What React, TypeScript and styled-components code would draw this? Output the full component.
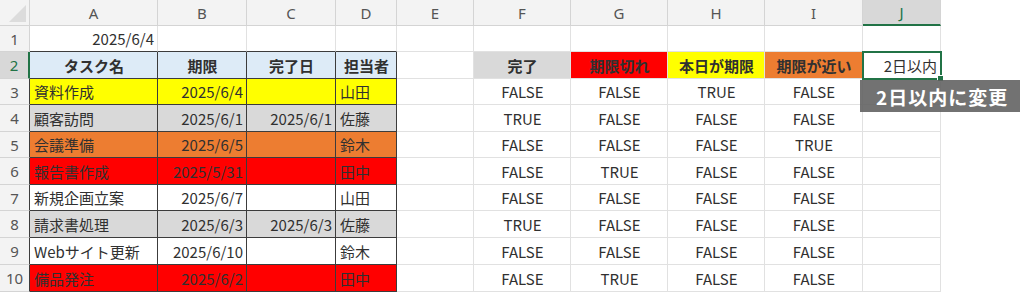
import React from 'react';
import styled, { createGlobalStyle } from 'styled-components';

const GlobalStyle = createGlobalStyle`
  html, body {
    margin: 0;
    padding: 0;
    background: #ffffff;
    overflow: hidden;
  }
  body {
    font-family: "Noto Sans CJK JP", "Noto Sans", sans-serif;
  }
`;

const colWidths = [30, 128, 89, 89, 61, 77, 97, 97, 97, 98, 78];
const rowHeights = [26, 26, 27, 26, 27, 26, 27, 26, 27, 27, 27];
const letters = ['A', 'B', 'C', 'D', 'E', 'F', 'G', 'H', 'I', 'J'];

const GRID = '#e1e1e1';
const DARK = '#3c3c3c';
const GREEN = '#217346';

const fills = {
  yellow: '#ffff00',
  gray: '#d9d9d9',
  orange: '#ed7d31',
  red: '#ff0000',
  blue: '#ddebf7',
};

type Fill = keyof typeof fills | undefined;

const Sheet = styled.div`
  position: relative;
  display: grid;
  grid-template-columns: ${colWidths.map(w => `${w}px`).join(' ')};
  grid-template-rows: ${rowHeights.map(h => `${h}px`).join(' ')};
  width: 941px;
  color: #303030;
  font-size: 15px;
`;

const Corner = styled.div`
  position: relative;
  background: #f3f3f3;
  border-right: 1px solid #d4d4d4;
  border-bottom: 1px solid #d4d4d4;
  box-sizing: border-box;

  &::after {
    content: '';
    position: absolute;
    right: 3px;
    bottom: 3px;
    border-left: 17px solid transparent;
    border-bottom: 17px solid #dcdcdc;
  }
`;

const ColHeader = styled.div<{ $active?: boolean }>`
  display: flex;
  align-items: center;
  justify-content: center;
  box-sizing: border-box;
  background: ${p => (p.$active ? '#d8d8d8' : '#f3f3f3')};
  color: ${p => (p.$active ? GREEN : '#555555')};
  border-right: 1px solid #d4d4d4;
  border-bottom: ${p => (p.$active ? `2px solid ${GREEN}` : '1px solid #d4d4d4')};
  font-family: "Noto Sans", "Noto Sans CJK JP", sans-serif;
  font-size: 15px;
`;

const RowHeader = styled.div<{ $active?: boolean; $edge?: string }>`
  display: flex;
  align-items: center;
  justify-content: center;
  box-sizing: border-box;
  background: ${p => (p.$active ? '#d8d8d8' : '#f3f3f3')};
  color: ${p => (p.$active ? GREEN : '#555555')};
  border-bottom: 1px solid #d4d4d4;
  border-right: ${p => (p.$active ? `2px solid ${GREEN}` : `1px solid ${p.$edge || '#d4d4d4'}`)};
  font-family: "Noto Sans", "Noto Sans CJK JP", sans-serif;
  font-size: 15px;
`;

const Cell = styled.div<{
  $fill?: Fill;
  $align?: 'left' | 'right' | 'center';
  $bold?: boolean;
  $right?: string;
  $bottom?: string;
  $selected?: boolean;
}>`
  position: relative;
  display: flex;
  align-items: center;
  justify-content: ${p => (p.$align === 'right' ? 'flex-end' : p.$align === 'center' ? 'center' : 'flex-start')};
  box-sizing: border-box;
  padding: 0 3px 0 4px;
  white-space: nowrap;
  overflow: visible;
  background: ${p => (p.$fill ? fills[p.$fill] : '#ffffff')};
  border-right: 1px solid ${p => p.$right || GRID};
  border-bottom: 1px solid ${p => p.$bottom || GRID};
  font-weight: ${p => (p.$bold ? 700 : 400)};
  outline: ${p => (p.$selected ? `2px solid ${GREEN}` : 'none')};
  outline-offset: -1px;
  z-index: ${p => (p.$selected ? 2 : 0)};

  &::after {
    content: '';
    display: ${p => (p.$selected ? 'block' : 'none')};
    position: absolute;
    right: -4px;
    bottom: -4px;
    width: 5px;
    height: 5px;
    background: ${GREEN};
    border: 1px solid #ffffff;
  }
`;

const Callout = styled.div`
  position: absolute;
  left: 860px;
  top: 80px;
  height: 32px;
  padding: 0 12px 0 16px;
  display: flex;
  align-items: center;
  white-space: nowrap;
  background: rgba(95, 95, 95, 0.88);
  color: #ffffff;
  font-size: 19px;
  font-weight: 700;
  letter-spacing: 1px;
  z-index: 5;
`;

type CellData = { text?: string; fill?: Fill; align?: 'left' | 'right' | 'center'; bold?: boolean };

const tasks: { name: string; due: string; done: string; who: string; fill: Fill; flags: string[] }[] = [
  { name: '資料作成', due: '2025/6/4', done: '', who: '山田', fill: 'yellow', flags: ['FALSE', 'FALSE', 'TRUE', 'FALSE'] },
  { name: '顧客訪問', due: '2025/6/1', done: '2025/6/1', who: '佐藤', fill: 'gray', flags: ['TRUE', 'FALSE', 'FALSE', 'FALSE'] },
  { name: '会議準備', due: '2025/6/5', done: '', who: '鈴木', fill: 'orange', flags: ['FALSE', 'FALSE', 'FALSE', 'TRUE'] },
  { name: '報告書作成', due: '2025/5/31', done: '', who: '田中', fill: 'red', flags: ['FALSE', 'TRUE', 'FALSE', 'FALSE'] },
  { name: '新規企画立案', due: '2025/6/7', done: '', who: '山田', fill: undefined, flags: ['FALSE', 'FALSE', 'FALSE', 'FALSE'] },
  { name: '請求書処理', due: '2025/6/3', done: '2025/6/3', who: '佐藤', fill: 'gray', flags: ['TRUE', 'FALSE', 'FALSE', 'FALSE'] },
  { name: 'Webサイト更新', due: '2025/6/10', done: '', who: '鈴木', fill: undefined, flags: ['FALSE', 'FALSE', 'FALSE', 'FALSE'] },
  { name: '備品発注', due: '2025/6/2', done: '', who: '田中', fill: 'red', flags: ['FALSE', 'TRUE', 'FALSE', 'FALSE'] },
];

const buildRows = (): CellData[][] => {
  const rows: CellData[][] = [];
  rows.push([{ text: '2025/6/4', align: 'right' }, {}, {}, {}, {}, {}, {}, {}, {}, {}]);
  rows.push([
    { text: 'タスク名', fill: 'blue', align: 'center', bold: true },
    { text: '期限', fill: 'blue', align: 'center', bold: true },
    { text: '完了日', fill: 'blue', align: 'center', bold: true },
    { text: '担当者', fill: 'blue', align: 'center', bold: true },
    {},
    { text: '完了', fill: 'gray', align: 'center', bold: true },
    { text: '期限切れ', fill: 'red', align: 'center', bold: true },
    { text: '本日が期限', fill: 'yellow', align: 'center', bold: true },
    { text: '期限が近い', fill: 'orange', align: 'center', bold: true },
    { text: '2日以内', align: 'right' },
  ]);
  tasks.forEach(t => {
    rows.push([
      { text: t.name, fill: t.fill },
      { text: t.due, fill: t.fill, align: 'right' },
      { text: t.done, fill: t.fill, align: 'right' },
      { text: t.who, fill: t.fill },
      {},
      ...t.flags.map(f => ({ text: f, align: 'center' as const })),
      {},
    ]);
  });
  return rows;
};

const App: React.FC = () => {
  const rows = buildRows();

  return (
    <>
      <GlobalStyle />
      <Sheet>
        <Corner />
        {letters.map(l => (
          <ColHeader key={l} $active={l === 'J'}>{l}</ColHeader>
        ))}
        {rows.map((row, r) => {
          const rowNum = r + 1;
          const inTable = rowNum >= 2;
          return (
            <React.Fragment key={rowNum}>
              <RowHeader $active={rowNum === 2} $edge={rowNum >= 3 ? DARK : undefined}>
                {rowNum}
              </RowHeader>
              {row.map((c, i) => {
                const tableCol = i <= 3;
                const right = inTable && tableCol ? DARK : undefined;
                const bottom = tableCol && (inTable || rowNum === 1) ? DARK : undefined;
                return (
                  <Cell
                    key={i}
                    $fill={c.fill}
                    $align={c.align}
                    $bold={c.bold}
                    $right={right}
                    $bottom={bottom}
                    $selected={rowNum === 2 && i === 9}
                  >
                    {c.text}
                  </Cell>
                );
              })}
            </React.Fragment>
          );
        })}
        <Callout>2日以内に変更</Callout>
      </Sheet>
    </>
  );
};

export default App;
